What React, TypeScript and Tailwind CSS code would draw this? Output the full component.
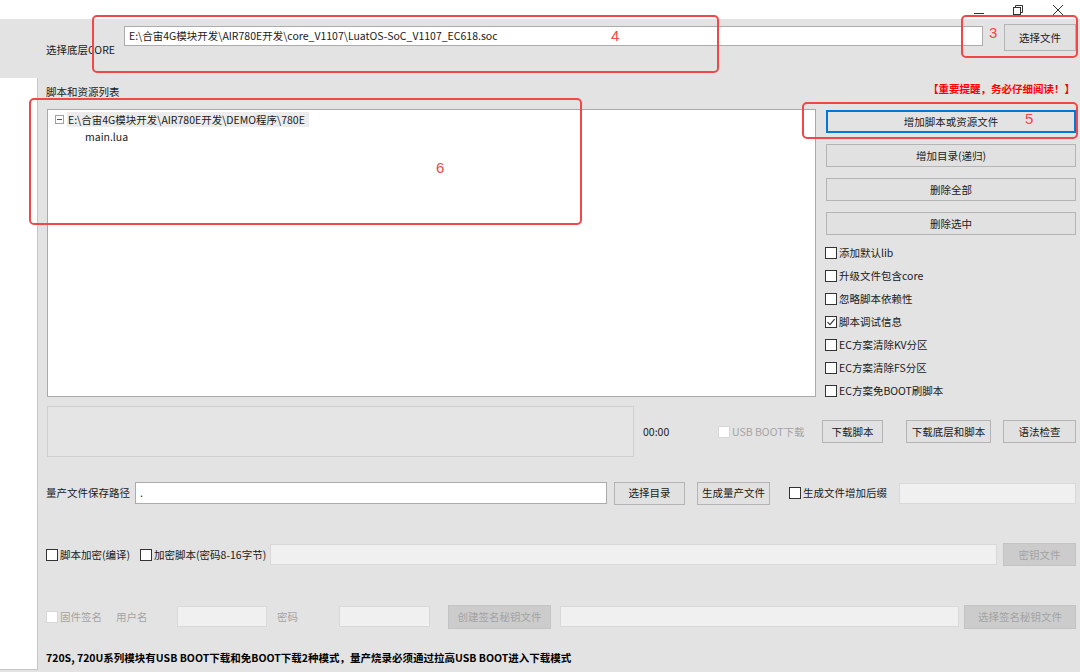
import type { ReactNode } from "react";

const FONT = { fontFamily: '"Noto Sans CJK SC", "Noto Sans", sans-serif' };

interface BtnProps {
  children: ReactNode;
  className?: string;
  focused?: boolean;
  disabled?: boolean;
}

const Btn = ({ children, className = "", focused, disabled }: BtnProps) => {
  let look = "bg-[#e1e1e1] border-[#b4b4b4] text-[#1a1a1a]";
  if (focused) look = "bg-[#e3e3e3] border-[#0078d7] text-[#1a1a1a] shadow-[inset_0_0_0_1px_#0078d7]";
  if (disabled) look = "bg-[#cccccc] border-[#c4c4c4] text-[#a3a3a3]";
  return (
    <div
      className={`flex shrink-0 items-center justify-center whitespace-nowrap border text-[10.5px] leading-[14px] ${look} ${className}`}
    >
      {children}
    </div>
  );
};

interface CheckProps {
  label: string;
  checked?: boolean;
  disabled?: boolean;
  className?: string;
}

const Check = ({ label, checked, disabled, className = "" }: CheckProps) => (
  <div className={`flex shrink-0 items-center whitespace-nowrap text-[10.5px] leading-[14px] ${className}`}>
    <span
      className={`flex h-[12px] w-[12px] shrink-0 items-center justify-center border bg-white ${
        disabled ? "border-[#d6d6d6]" : "border-[#333333]"
      }`}
    >
      {checked && (
        <svg width="10" height="10" viewBox="0 0 10 10">
          <path d="M1.5 5.2 L4 7.6 L8.6 2.2" fill="none" stroke="#333" strokeWidth="1.1" />
        </svg>
      )}
    </span>
    <span className={`ml-[2px] ${disabled ? "text-[#a3a3a3]" : "text-[#1a1a1a]"}`}>{label}</span>
  </div>
);

const Box = ({ className = "" }: { className?: string }) => (
  <div
    className={`pointer-events-none absolute rounded-[5px] border-2 border-[#f04848] ${className}`}
  />
);

const Num = ({ n, className = "" }: { n: string; className?: string }) => (
  <span
    className={`absolute text-[15px] leading-[16px] text-[#f04848] ${className}`}
    style={{ fontFamily: '"Liberation Sans", sans-serif' }}
  >
    {n}
  </span>
);

const sideChecks = [
  { label: "添加默认lib" },
  { label: "升级文件包含core" },
  { label: "忽略脚本依赖性" },
  { label: "脚本调试信息", checked: true },
  { label: "EC方案清除KV分区" },
  { label: "EC方案清除FS分区" },
  { label: "EC方案免BOOT刷脚本" },
];

export default function App() {
  return (
    <div
      className="relative flex h-[672px] w-[1080px] flex-col overflow-hidden bg-white text-[#1a1a1a]"
      style={FONT}
    >
      {/* Title bar */}
      <div className="flex h-[19px] shrink-0 items-center justify-end bg-white pr-[16px]">
        <svg width="12" height="12" viewBox="0 0 12 12" className="mr-[27px]">
          <path d="M1 9.5 H11" stroke="#333" strokeWidth="1" />
        </svg>
        <svg width="12" height="12" viewBox="0 0 12 12" className="mr-[28px]">
          <rect x="1.5" y="3.5" width="7" height="7" fill="none" stroke="#333" />
          <path d="M3.5 3.5 V1.5 H10.5 V8.5 H8.5" fill="none" stroke="#333" />
        </svg>
        <svg width="12" height="12" viewBox="0 0 12 12">
          <path d="M1 1 L11 11 M11 1 L1 11" stroke="#333" strokeWidth="1" />
        </svg>
      </div>

      <div className="flex flex-1 bg-[#e3e3e3]">
        {/* Left strip */}
        <div className="flex w-[38px] shrink-0 flex-col">
          <div className="h-[59px]" />
          <div className="mb-[2px] flex-1 border-r border-b border-[#c6c6c6] bg-white" />
        </div>

        {/* Main */}
        <div className="flex flex-1 flex-col pl-[8px] pr-[4px] text-[10.5px]">
          {/* Core row */}
          <div className="flex h-[59px] items-start">
            <div className="w-[78px] shrink-0 whitespace-nowrap pt-[24px] leading-[14px]">选择底层CORE</div>
            <div className="mt-[7px] flex h-[20px] flex-1 items-center whitespace-nowrap border border-[#acacac] bg-white pl-[4px]">
              E:\合宙4G模块开发\AIR780E开发\core_V1107\LuatOS-SoC_V1107_EC618.soc
            </div>
            <Btn className="ml-[21px] mt-[5px] h-[27px] w-[72px]">选择文件</Btn>
          </div>

          {/* List label row */}
          <div className="flex h-[31px] items-start justify-between">
            <div className="pt-[7px] leading-[14px]">脚本和资源列表</div>
            <div className="pr-[1px] pt-[4px] text-[10.5px] font-bold leading-[14px] text-[#ff0000]">
              【重要提醒，务必仔细阅读！】
            </div>
          </div>

          {/* Tree + side panel */}
          <div className="flex h-[288px]">
            <div className="ml-px flex w-[769px] flex-col border border-[#a9a9a9] bg-white pt-[2px] leading-[15px]">
              <div className="flex items-center pl-[7px]">
                <span className="flex h-[9px] w-[9px] items-center justify-center border border-[#a0a0a0]">
                  <span className="h-px w-[5px] bg-[#555]" />
                </span>
                <span className="ml-[3px] whitespace-nowrap bg-[#ececec] pl-px pr-[4px]">
                  E:\合宙4G模块开发\AIR780E开发\DEMO程序\780E
                </span>
              </div>
              <div className="mt-[2px] pl-[37px]">main.lua</div>
            </div>

            <div className="ml-[10px] flex w-[250px] flex-col pt-[1px]">
              <div className="flex flex-col gap-[11px]">
                <Btn focused className="h-[23px]">增加脚本或资源文件</Btn>
                <Btn className="h-[23px]">增加目录(递归)</Btn>
                <Btn className="h-[23px]">删除全部</Btn>
                <Btn className="h-[23px]">删除选中</Btn>
              </div>
              <div className="-ml-px mt-[6px] flex flex-col">
                {sideChecks.map((c) => (
                  <Check key={c.label} label={c.label} checked={c.checked} className="h-[23px]" />
                ))}
              </div>
            </div>
          </div>

          {/* Progress row */}
          <div className="mt-[9px] flex h-[51px] items-center">
            <div className="ml-px h-[51px] w-[587px] border border-[#cfcfcf] bg-[#e5e5e5]" />
            <div className="ml-[9px] w-[75px]">00:00</div>
            <Check label="USB BOOT下载" disabled className="w-[104px]" />
            <Btn className="h-[23px] w-[61px]">下载脚本</Btn>
            <Btn className="ml-[23px] h-[23px] w-[85px]">下载底层和脚本</Btn>
            <Btn className="ml-[12px] h-[23px] w-[73px]">语法检查</Btn>
          </div>

          {/* Mass production row */}
          <div className="mt-[25px] flex h-[22px] items-center">
            <div className="w-[89px] shrink-0 whitespace-nowrap">量产文件保存路径</div>
            <div className="flex h-[22px] w-[472px] items-center border border-[#acacac] bg-white pl-[4px]">
              .
            </div>
            <Btn className="ml-[7px] h-[23px] w-[71px]">选择目录</Btn>
            <Btn className="ml-[12px] h-[23px] w-[73px]">生成量产文件</Btn>
            <Check label="生成文件增加后缀" className="ml-[19px]" />
            <div className="ml-auto h-[21px] w-[177px] border border-[#d9d9d9] bg-[#f0f0f0]" />
          </div>

          {/* Encrypt row */}
          <div className="mt-[39px] flex h-[23px] items-center">
            <Check label="脚本加密(编译)" className="w-[94px]" />
            <Check label="加密脚本(密码8-16字节)" className="w-[130px]" />
            <div className="h-[21px] flex-1 border border-[#d9d9d9] bg-[#f0f0f0]" />
            <Btn disabled className="ml-[6px] h-[23px] w-[73px]">密钥文件</Btn>
          </div>

          {/* Signature row */}
          <div className="mt-[39px] flex h-[23px] items-center text-[#a3a3a3]">
            <Check label="固件签名" disabled className="w-[70px]" />
            <div className="w-[61px]">用户名</div>
            <div className="h-[21px] w-[90px] border border-[#d9d9d9] bg-[#f0f0f0]" />
            <div className="w-[72px] pl-[10px]">密码</div>
            <div className="h-[21px] w-[91px] border border-[#d9d9d9] bg-[#f0f0f0]" />
            <Btn disabled className="ml-[18px] h-[24px] w-[103px]">创建签名秘钥文件</Btn>
            <div className="ml-[9px] h-[21px] w-[399px] border border-[#d9d9d9] bg-[#f0f0f0]" />
            <Btn disabled className="ml-[5px] h-[24px] w-[112px]">选择签名秘钥文件</Btn>
          </div>

          {/* Bottom note */}
          <div className="mt-[23px] whitespace-nowrap text-[10.5px] font-bold leading-[14px] text-black">
            720S, 720U系列模块有USB BOOT下载和免BOOT下载2种模式，量产烧录必须通过拉高USB BOOT进入下载模式
          </div>
        </div>
      </div>

      {/* Annotations */}
      <Box className="left-[92px] top-[15px] h-[58px] w-[627px]" />
      <Num n="4" className="left-[611px] top-[28px]" />
      <Box className="left-[961px] top-[15px] h-[43px] w-[117px]" />
      <Num n="3" className="left-[989px] top-[25px]" />
      <Box className="left-[802px] top-[102px] h-[37px] w-[276px]" />
      <Num n="5" className="left-[1025px] top-[111px]" />
      <Box className="left-[29px] top-[98px] h-[127px] w-[553px]" />
      <Num n="6" className="left-[436px] top-[160px]" />
    </div>
  );
}
